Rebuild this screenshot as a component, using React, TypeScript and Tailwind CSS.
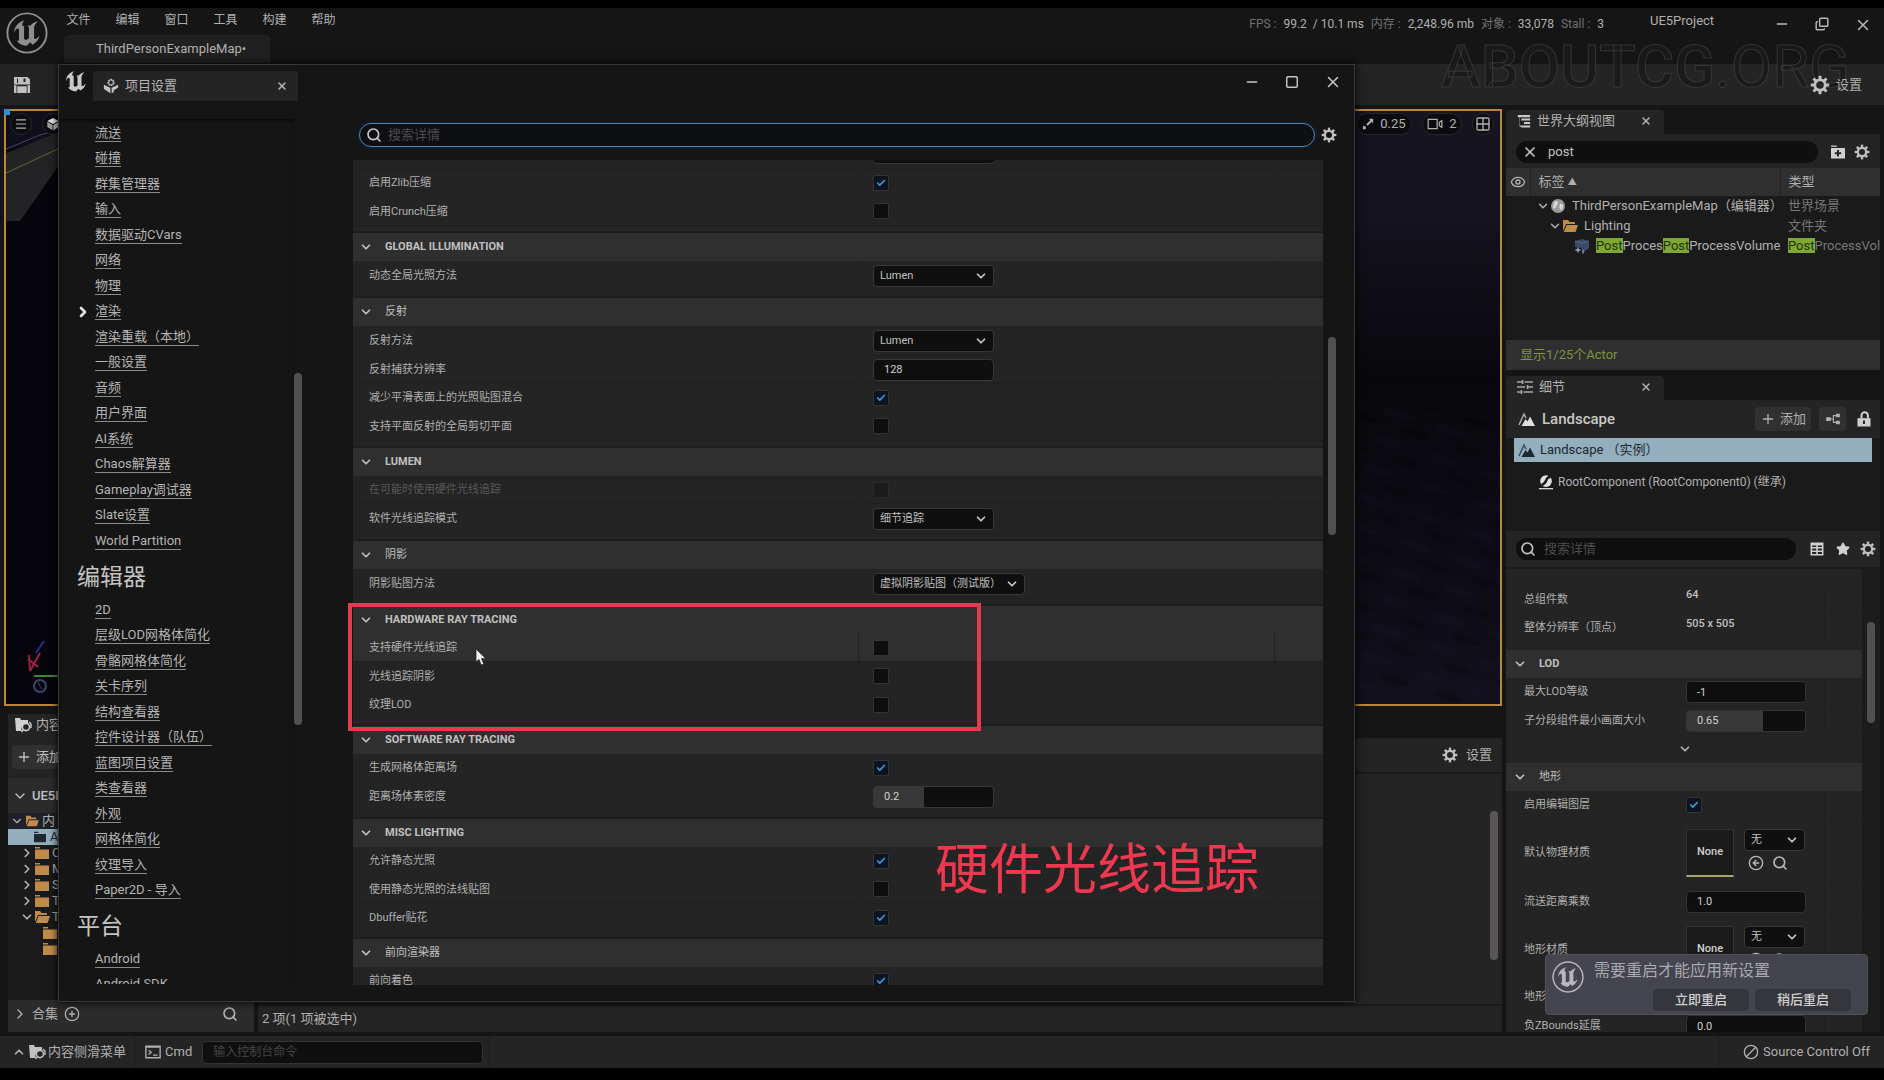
import React from "react";
import {
  Ban,
  Check,
  ChevronDown,
  ChevronRight,
  ChevronUp,
  CircleArrowLeft,
  CirclePlus,
  Copy,
  Eye,
  Grid2x2,
  Menu,
  Minus,
  Plus,
  Search,
  Square,
  Star,
  X,
} from "lucide-react";

/* ---------- drawings ---------- */

const U_PATH =
  "M19.13 13.729c-.206.997-1.126 3.557-4.06 4.942l-1.179-1.325-1.988 2a7.338 7.338 0 01-5.804-2.978 2.859 2.859 0 00.65.123c.326.006.678-.114.678-.66v-5.394a.89.89 0 00-1.116-.89c-.92.212-1.656 2.509-1.656 2.509a7.304 7.304 0 012.528-5.597 7.408 7.408 0 013.73-1.721c-1.006.573-1.57 1.507-1.57 2.29 0 1.262.76 1.109.984.923v7.28a1.157 1.157 0 00.148.256 1.075 1.075 0 00.88.445c.76 0 1.747-.868 1.747-.868V9.172c0-.6-.452-1.324-.905-1.572 0 0 .838-.149 1.484.346a5.537 5.537 0 01.387-.425c1.508-1.48 2.929-1.902 4.112-2.112 0 0-2.151 1.69-2.151 3.96 0 1.687.043 5.801.043 5.801.799.771 1.986-.342 3.059-1.441Z";

function UnrealRing({ className }: { className?: string }) {
  return (
    <svg viewBox="0 0 24 24" className={className} fill="currentColor">
      <circle cx="12" cy="12" r="11.2" fill="none" stroke="currentColor" strokeWidth="1.1" />
      <path d={U_PATH} />
    </svg>
  );
}

function UnrealU({ className }: { className?: string }) {
  return (
    <svg viewBox="4 5 16 15" className={className} fill="currentColor">
      <path d={U_PATH} />
    </svg>
  );
}

function Gear({ className }: { className?: string }) {
  return (
    <svg viewBox="0 0 20 20" className={className} fill="none" stroke="currentColor">
      <circle cx="10" cy="10" r="5.2" strokeWidth="2.8" />
      {[0, 45, 90, 135, 180, 225, 270, 315].map((a) => (
        <path key={a} d="M10 4.4V.8" strokeWidth="3" transform={`rotate(${a} 10 10)`} />
      ))}
    </svg>
  );
}

function SaveIcon({ className }: { className?: string }) {
  return (
    <svg viewBox="0 0 18 18" className={className} fill="currentColor">
      <path fillRule="evenodd" d="M1 1h13.500L17 3.500V8.500H1zM10.500 2.500v3.500h2V2.500zM4 2.500v4.500h1V2.500z" />
      <path d="M1 9.200h2.500V17H1zM14.500 9.200H17V17h-2.500zM4.300 10.200h9.400v6.800H4.300z" />
    </svg>
  );
}

function NewFolderIcon({ className }: { className?: string }) {
  return (
    <svg viewBox="0 0 16 16" className={className}>
      <path d="M1 1.500h5l1.500 1.300H1zM1 4h14v10.500H1z" fill="currentColor" />
      <path d="M8 6v6.400M4.800 9.200h6.400" stroke="#242424" strokeWidth="2" />
    </svg>
  );
}

function LockIcon({ className }: { className?: string }) {
  return (
    <svg viewBox="0 0 16 16" className={className}>
      <path d="M5.500 7.500V4.500a3.200 3.200 0 0 1 6.400 0V7" fill="none" stroke="currentColor" strokeWidth="2" />
      <path d="M1.500 7.200h13V15.500h-13z" fill="currentColor" />
      <path d="M8 9.500v3.500" stroke="#242424" strokeWidth="2" />
    </svg>
  );
}

function TableIcon({ className }: { className?: string }) {
  return (
    <svg viewBox="0 0 16 16" className={className} fill="none" stroke="currentColor" strokeWidth="1.8">
      <path d="M1.500 1.500h13v13h-13zM1.500 3h13M1.500 6.500h13M1.500 10.500h13M8 4v10.500" />
    </svg>
  );
}

function CubeIcon({ className }: { className?: string }) {
  return (
    <svg viewBox="0 0 16 16" className={className}>
      <path d="M8 1l6.500 3.500L8 8 1.500 4.500z" fill="#e0e0e0" />
      <path d="M1.500 5.500 7.500 9v6l-6-3.500z" fill="#a0a0a0" />
      <path d="M14.500 5.500 8.500 9v6l6-3.500z" fill="#c0c0c0" />
    </svg>
  );
}

function Folder({ open, className }: { open?: boolean; className?: string }) {
  return (
    <svg viewBox="0 0 16 14" className={className} fill="currentColor">
      {open ? (
        <>
          <path d="M1 1h5l1.500 2H13v2H4L1.600 11H1z" />
          <path d="M4.600 6H16l-2.400 7H1.800z" />
        </>
      ) : (
        <path d="M1 1h5v1.400H1zM1 3.400h14V13H1z" />
      )}
    </svg>
  );
}

function ContentIcon({ className }: { className?: string }) {
  return (
    <svg viewBox="0 0 18 16" className={className}>
      <path d="M1 1h5l1 2h7v4a5 5 0 0 0-6 7H2z" fill="currentColor" />
      <circle cx="12" cy="10" r="3.600" fill="none" stroke="currentColor" strokeWidth="1.600" />
      <path d="M9.400 12.600 7.600 15M15 5l2 2v4" fill="none" stroke="currentColor" strokeWidth="1.400" />
    </svg>
  );
}

function ProjectIcon({ className }: { className?: string }) {
  return (
    <svg viewBox="0 0 18 18" className={className}>
      <circle cx="9" cy="5" r="3" fill="none" stroke="currentColor" strokeWidth="2.200" strokeDasharray="2 .6" />
      <path d="M1 7.500 8.300 11v6.200L1 12.500z" fill="currentColor" />
      <path d="M17 7.500 9.700 11v6.200l2.600-1.400-.2-2L17 11z" fill="currentColor" />
    </svg>
  );
}

function LandscapeIcon({ className }: { className?: string }) {
  return (
    <svg viewBox="0 0 18 16" className={className}>
      <path d="M1 14 6 3l2 4" fill="none" stroke="currentColor" strokeWidth="1.600" opacity=".7" />
      <path d="M3.500 15 7.600 8l2 2.600L12 5.500 17 15z" fill="currentColor" />
    </svg>
  );
}

function SceneRootIcon({ className }: { className?: string }) {
  return (
    <svg viewBox="0 0 18 18" className={className}>
      <circle cx="9" cy="8" r="6.600" fill="currentColor" />
      <path d="M14 3.500C7 3.500 12 10 4 12.500" fill="none" stroke="#1a1a1a" strokeWidth="2.800" />
      <path d="M1 16.500h16" stroke="currentColor" strokeWidth="1.400" />
    </svg>
  );
}

function OutlinerIcon({ className }: { className?: string }) {
  return (
    <svg viewBox="0 0 16 16" className={className} fill="currentColor">
      <path d="M1 1h14v2.600H1zM5 5h10v2.400H5zM8 9h7v2.400H8zM5 13h10v2.400H5zM2 4h1v10.600h2V13H3.400V4z" />
    </svg>
  );
}

function SlidersIcon({ className }: { className?: string }) {
  return (
    <svg viewBox="0 0 16 16" className={className} stroke="currentColor" strokeWidth="1.600" fill="none">
      <path d="M0 3h5M7.500 3H16M5.600 1v4M0 8h8M10.500 8H16M10.500 6v4M0 13h4M6.500 13H16M4.500 11v4" />
    </svg>
  );
}

function NodesIcon({ className }: { className?: string }) {
  return (
    <svg viewBox="0 0 18 14" className={className} fill="currentColor">
      <path d="M1 5h5.500v4.200H1zM12.500 1H17v4h-4.500zM12.500 9H17v4h-4.500z" />
      <path d="M6 7h3.500M12.500 3h-3v8h3" fill="none" stroke="currentColor" strokeWidth="1.300" />
    </svg>
  );
}

function CameraIcon({ className }: { className?: string }) {
  return (
    <svg viewBox="0 0 18 14" className={className} fill="none" stroke="currentColor" strokeWidth="1.400">
      <path d="M1 1.500h10.500v11H1zM14 5v4l3 2V3z" />
    </svg>
  );
}

function ScaleIcon({ className }: { className?: string }) {
  return (
    <svg viewBox="0 0 14 14" className={className} fill="currentColor">
      <path d="M1 9.500h3.500V13H1zM8 1h5v5l-1.700-1.700L6.600 9 5 7.400l4.700-4.700z" />
    </svg>
  );
}

function TerminalIcon({ className }: { className?: string }) {
  return (
    <svg viewBox="0 0 18 16" className={className} fill="none" stroke="currentColor" strokeWidth="1.500">
      <path d="M1 1.500h16v13H1z" />
      <path d="M1 2.500h16M4 6l3 2.300L4 10.800M9 11.500h5" />
    </svg>
  );
}

function PostVolumeIcon({ className }: { className?: string }) {
  return (
    <svg viewBox="0 0 16 16" className={className}>
      <path d="M1 3 8 1l7 2v7l-5 4-3-4-6-1z" fill="#3b4a68" />
      <path d="M1 3l7 2 7-2" fill="none" stroke="#51658c" />
      <path d="M4 9.500v5M1.500 12h5M9 12v3.500" stroke="#9aa6bd" strokeWidth="1.300" />
    </svg>
  );
}

function Scene() {
  return (
    <svg className="absolute inset-0 h-full w-full" preserveAspectRatio="none">
      <defs>
        <linearGradient id="sky" x1="0" y1="0" x2="0" y2="1">
          <stop offset="0" stopColor="#15141f" />
          <stop offset=".18" stopColor="#14131e" />
          <stop offset=".45" stopColor="#08080c" />
          <stop offset=".68" stopColor="#0c0b13" />
          <stop offset="1" stopColor="#11101b" />
        </linearGradient>
        <pattern id="waves" width="56" height="30" patternUnits="userSpaceOnUse" patternTransform="rotate(18)">
          <ellipse cx="18" cy="8" rx="16" ry="4" fill="#1b1937" opacity=".16" />
          <ellipse cx="40" cy="22" rx="15" ry="4" fill="#000" opacity=".2" />
        </pattern>
      </defs>
      <rect width="100%" height="100%" fill="url(#sky)" />
      <rect y="50%" width="100%" height="50%" fill="url(#waves)" />
      <rect width="56" height="100%" fill="#06050b" />
      <path d="M0 0h56v22L0 40z" fill="#0f0e1b" />
      <path d="M0 42 56 20v30L14 110H0z" fill="#232326" />
      <path d="M0 38 34 24 56 18" stroke="#4a4660" fill="none" />
      <path d="M0 62 56 36" stroke="#5d6c2c" fill="none" />
      <path d="m24 560 10-18M22 548l10 8M24 560l-1-16" stroke="#a01f45" strokeWidth="2" />
      <path d="m30 542 8-12" stroke="#2a2a8a" strokeWidth="2" />
      <path d="M28 565h26" stroke="#3b8a35" strokeWidth="2" />
      <circle cx="34" cy="575" r="6" fill="none" stroke="#39496b" strokeWidth="2" />
      <path d="m32 572 4 6" stroke="#39496b" />
    </svg>
  );
}

/* ---------- controls ---------- */

function CheckBox({ id, checked, disabled }: { id: string; checked?: boolean; disabled?: boolean }) {
  return (
    <span className={disabled ? "grid size-4 opacity-40" : "grid size-4"}>
      <input
        id={id}
        type="checkbox"
        defaultChecked={checked}
        disabled={disabled}
        className="peer col-start-1 row-start-1 size-4 appearance-none rounded-xs border border-[#333] bg-[#0e0e0e] checked:bg-[#0b1420]"
      />
      <Check
        strokeWidth={4}
        className="pointer-events-none invisible col-start-1 row-start-1 m-auto size-2.5 text-[#3a9bd0] peer-checked:visible"
      />
    </span>
  );
}

function Combo({ id, value, width }: { id: string; value: string; width: string }) {
  return (
    <span className={"relative flex items-center " + width}>
      <select
        id={id}
        className="h-[22px] w-full appearance-none rounded-sm border border-[#383838] bg-[#0f0f0f] pt-px pl-1.5 text-[11px] text-[#c0c0c0]"
      >
        <option>{value}</option>
      </select>
      <ChevronDown strokeWidth={3} className="pointer-events-none absolute right-1.5 size-3.5 text-[#c8c8c8]" />
    </span>
  );
}

type Row = {
  label: string;
  kind: "check" | "combo" | "number" | "slider";
  on?: boolean;
  off?: boolean;
  hot?: boolean;
  wide?: boolean;
  value?: string;
};

type Group = { title: string; latin?: boolean; rows: Row[] };

const groups: Group[] = [
  { title: "GLOBAL ILLUMINATION", latin: true, rows: [{ label: "动态全局光照方法", kind: "combo", value: "Lumen" }] },
  {
    title: "反射",
    rows: [
      { label: "反射方法", kind: "combo", value: "Lumen" },
      { label: "反射捕获分辨率", kind: "number", value: "128" },
      { label: "减少平滑表面上的光照贴图混合", kind: "check", on: true },
      { label: "支持平面反射的全局剪切平面", kind: "check" },
    ],
  },
  {
    title: "LUMEN",
    latin: true,
    rows: [
      { label: "在可能时使用硬件光线追踪", kind: "check", off: true },
      { label: "软件光线追踪模式", kind: "combo", value: "细节追踪" },
    ],
  },
  { title: "阴影", rows: [{ label: "阴影贴图方法", kind: "combo", value: "虚拟阴影贴图（测试版）", wide: true }] },
  {
    title: "HARDWARE RAY TRACING",
    latin: true,
    rows: [
      { label: "支持硬件光线追踪", kind: "check", hot: true },
      { label: "光线追踪阴影", kind: "check" },
      { label: "纹理LOD", kind: "check" },
    ],
  },
  {
    title: "SOFTWARE RAY TRACING",
    latin: true,
    rows: [
      { label: "生成网格体距离场", kind: "check", on: true },
      { label: "距离场体素密度", kind: "slider", value: "0.2" },
    ],
  },
  {
    title: "MISC LIGHTING",
    latin: true,
    rows: [
      { label: "允许静态光照", kind: "check", on: true },
      { label: "使用静态光照的法线贴图", kind: "check" },
      { label: "Dbuffer贴花", kind: "check", on: true },
    ],
  },
  { title: "前向渲染器", rows: [{ label: "前向着色", kind: "check", on: true }] },
];

function SettingRow({ row }: { row: Row }) {
  const height =
    row.kind === "combo" || row.kind === "slider"
      ? "h-[30px]"
      : "h-7 last:even:h-[29px] nth-2:nth-last-2:h-[29px]";
  return (
    <div className={"flex shrink-0 border-b border-[#202020] " + height + (row.hot ? " bg-[#2f2f2f]" : "")}>
      <div className="flex w-[506px] items-center border-r border-[#202020] pt-0.5 pl-4">
        <label htmlFor={row.label} className={row.off ? "text-[#585858]" : "text-[#b0b0b0]"}>
          {row.label}
        </label>
      </div>
      <div className="flex flex-1 items-center pl-3.5">
        {row.kind === "check" && <CheckBox id={row.label} checked={row.on} disabled={row.off} />}
        {row.kind === "combo" && (
          <Combo id={row.label} value={row.value ?? ""} width={row.wide ? "w-[152px]" : "w-[121px]"} />
        )}
        {row.kind === "number" && (
          <input
            id={row.label}
            defaultValue={row.value}
            className="h-[22px] w-[121px] rounded-sm border border-[#383838] bg-[#0f0f0f] pl-2.5 text-[#d0d0d0]"
          />
        )}
        {row.kind === "slider" && (
          <input
            id={row.label}
            defaultValue={row.value}
            className="h-[22px] w-[121px] rounded-sm border border-[#383838] bg-[linear-gradient(90deg,#383838_42%,#0f0f0f_42%)] pl-2.5 text-[#d0d0d0]"
          />
        )}
      </div>
      <div className="w-[49px] border-l border-[#202020]" />
    </div>
  );
}

function SettingGroup({ group }: { group: Group }) {
  return (
    <section className="shrink-0">
      <button
        className={
          "flex h-7 w-full items-center gap-3 bg-[#2f2f2f] pl-1.5 text-[#c0c0c0] " +
          (group.latin ? "font-bold" : "font-normal")
        }
      >
        <ChevronDown strokeWidth={3} className="size-3.5" />
        {group.title}
      </button>
      <div>
        {group.rows.map((r) => (
          <SettingRow key={r.label} row={r} />
        ))}
      </div>
      <div className="h-[7px] border-b-2 border-[#1d1d1d]" />
    </section>
  );
}

const engineLinks = [
  "流送", "碰撞", "群集管理器", "输入", "数据驱动CVars", "网络", "物理", "渲染", "渲染重载（本地）", "一般设置",
  "音频", "用户界面", "AI系统", "Chaos解算器", "Gameplay调试器", "Slate设置", "World Partition",
];
const editorLinks = [
  "2D", "层级LOD网格体简化", "骨骼网格体简化", "关卡序列", "结构查看器", "控件设计器（队伍）", "蓝图项目设置",
  "类查看器", "外观", "网格体简化", "纹理导入", "Paper2D - 导入",
];

function LinkList({ items }: { items: string[] }) {
  return (
    <ul className="pl-9">
      {items.map((t) => (
        <li key={t} className="relative flex h-[26px] items-center even:h-[25px]">
          {t === "渲染" && <ChevronRight strokeWidth={4} className="absolute -left-5 size-4 text-[#e0e0e0]" />}
          <a href="#" className="border-b border-[#8a8a8a] leading-4">
            {t}
          </a>
        </li>
      ))}
    </ul>
  );
}

function ProjectSettings() {
  return (
    <div
      role="dialog"
      aria-label="项目设置"
      className="absolute top-16 right-[529px] bottom-[78px] left-[58px] flex flex-col border border-[#383838] bg-[#151515] text-[#b4b4b4] shadow-[0_0_8px_#000]"
    >
      <header className="flex h-[42px] shrink-0 items-start">
        <UnrealU className="mt-1.5 ml-1.5 h-[22px] w-[22px] text-[#c8c8c8]" />
        <div className="mt-1.5 ml-1.5 flex h-[30px] w-[205px] items-center rounded-t-sm bg-[#242424] pr-2.5 pl-2.5">
          <ProjectIcon className="size-4 text-[#c0c0c0]" />
          <span className="ml-1.5 flex-1 text-[13px]">项目设置</span>
          <button aria-label="关闭标签">
            <X strokeWidth={3} className="size-3" />
          </button>
        </div>
        <div className="mt-2 mr-3 ml-auto flex gap-[25px] text-[#c8c8c8]">
          <button aria-label="最小化"><Minus strokeWidth={2} className="size-4" /></button>
          <button aria-label="最大化"><Square strokeWidth={2.5} className="size-3.5" /></button>
          <button aria-label="关闭"><X strokeWidth={2} className="size-[18px]" /></button>
        </div>
      </header>
      <div className="flex min-h-0 flex-1">
        <nav className="mt-3 mb-[17px] w-[235px] overflow-hidden pt-px text-[13px] shadow-[inset_0_2px_2px_#0c0c0c]">
          <LinkList items={engineLinks} />
          <h2 className="flex h-[43px] items-center pt-1.5 pl-[18px] text-[23px] text-[#c4c4c4]">编辑器</h2>
          <LinkList items={editorLinks} />
          <h2 className="flex h-[43px] items-center pt-1.5 pl-[18px] text-[23px] text-[#c4c4c4]">平台</h2>
          <LinkList items={["Android", "Android SDK"]} />
        </nav>
        <div className="flex w-2 flex-col pt-[266px]">
          <div className="h-[352px] rounded-full bg-[#505050]" />
        </div>
        <main className="ml-[51px] flex min-w-0 flex-1 flex-col pt-4">
          <div className="flex items-center gap-1.5 pr-[17px] pl-1.5">
            <label className="flex h-6 flex-1 items-center rounded-full border border-[#5585b0] bg-[#0e0f12] pl-1.5 shadow-[0_0_4px_#0a2a50]">
              <Search strokeWidth={2.5} className="size-4 text-[#c8c8c8]" />
              <input
                aria-label="搜索详情"
                placeholder="搜索详情"
                className="ml-1.5 min-w-0 flex-1 bg-transparent text-[13px] outline-none placeholder:text-[#4c4c4c]"
              />
            </label>
            <button aria-label="设置选项"><Gear className="size-4 text-[#c0c0c0]" /></button>
          </div>
          <div className="mt-[13px] mb-4 flex min-h-0 flex-1 text-[11px]">
            <div className="flex min-w-0 flex-1 flex-col overflow-hidden bg-[#242424]">
              <div className="h-[9px] shrink-0 border-b border-[#202020] pl-[520px]">
                <div className="h-1 w-[121px] rounded-b-sm border-b border-[#383838] bg-[#0f0f0f]" />
              </div>
              <div className="shrink-0">
                <SettingRow row={{ label: "启用Zlib压缩", kind: "check", on: true }} />
                <SettingRow row={{ label: "启用Crunch压缩", kind: "check" }} />
                <div className="h-[7px] border-b-2 border-[#1d1d1d]" />
              </div>
              {groups.map((g) => (
                <SettingGroup key={g.title} group={g} />
              ))}
            </div>
            <div className="flex w-[31px] flex-col bg-[#151515] pt-[177px] pl-[5px]">
              <div className="h-[198px] w-2 rounded-full bg-[#505050]" />
            </div>
          </div>
        </main>
      </div>
    </div>
  );
}

/* ---------- right side ---------- */

function Mark({ children }: { children: React.ReactNode }) {
  return <mark className="bg-[#7fa832] text-[#26310f]">{children}</mark>;
}

function PanelTab({ icon, title }: { icon: React.ReactNode; title: string }) {
  return (
    <div className="flex h-6 w-[158px] shrink-0 items-center rounded-t-sm bg-[#242424] pr-3 pb-0.5 pl-[11px] text-[13px] text-[#b0b0b0]">
      {icon}
      <span className="ml-1.5 flex-1">{title}</span>
      <button aria-label={"关闭" + title}><X strokeWidth={3} className="size-3" /></button>
    </div>
  );
}

function Outliner() {
  return (
    <section className="flex h-[260px] shrink-0 flex-col">
      <PanelTab icon={<OutlinerIcon className="size-3.5 text-[#c8c8c8]" />} title="世界大纲视图" />
      <div className="flex min-h-0 flex-1 flex-col bg-[#1a1a1a]">
        <div className="flex h-[34px] shrink-0 items-center bg-[#242424] pt-px pr-2.5 pl-2.5">
          <label className="flex h-[22px] flex-1 items-center rounded-full bg-[#0f0f0f] pl-1.5">
            <X strokeWidth={2.5} className="size-4 text-[#c8c8c8]" />
            <input aria-label="搜索大纲" defaultValue="post" className="ml-2.5 w-40 text-[13px] text-[#c0c0c0]" />
          </label>
          <button aria-label="新建文件夹" className="ml-3">
            <NewFolderIcon className="size-4 text-[#d0d0d0]" />
          </button>
          <button aria-label="大纲设置" className="ml-2"><Gear className="size-4 text-[#c0c0c0]" /></button>
        </div>
        <table className="w-full table-fixed border-collapse text-left text-[13px] whitespace-nowrap text-[#b0b0b0]">
          <thead>
            <tr className="h-7 bg-[#2f2f2f]">
              <th className="w-6 border-r border-[#242424] pl-1"><Eye className="size-4" /></th>
              <th className="w-[250px] border-r border-[#242424] pl-2 font-normal">
                标签 <span className="align-middle text-[9px]">▲</span>
              </th>
              <th className="pl-2 font-normal">类型</th>
            </tr>
          </thead>
          <tbody>
            <tr className="h-5">
              <td />
              <td className="pl-1.5">
                <div className="flex items-center">
                  <ChevronDown strokeWidth={2.5} className="size-3.5 shrink-0" />
                  <svg viewBox="0 0 16 16" className="mr-1.5 size-4 shrink-0">
                    <circle cx="8" cy="8" r="7" fill="#9a9a9a" />
                    <path d="M4 4c4-3 5 1 3 3s-1 5-4 3zM10 6c3-1 4 2 2 6-3 0-3-4-2-6z" fill="#d8d8d8" />
                  </svg>
                  ThirdPersonExampleMap（编辑器）
                </div>
              </td>
              <td className="pl-2 text-[#777]">世界场景</td>
            </tr>
            <tr className="h-5">
              <td />
              <td className="pl-[18px]">
                <div className="flex items-center">
                  <ChevronDown strokeWidth={2.5} className="size-3.5" />
                  <Folder open className="mr-1.5 h-3.5 w-4 text-[#c08a4a]" />
                  Lighting
                </div>
              </td>
              <td className="pl-2 text-[#777]">文件夹</td>
            </tr>
            <tr className="h-5">
              <td />
              <td className="pl-11">
                <div className="flex items-center">
                  <PostVolumeIcon className="mr-1.5 size-4 shrink-0" />
                  <span><Mark>Post</Mark>Proces<Mark>Post</Mark>ProcessVolume</span>
                </div>
              </td>
              <td className="overflow-hidden pl-2 text-[#777]"><Mark>Post</Mark>ProcessVolume</td>
            </tr>
          </tbody>
        </table>
        <div className="mt-auto flex h-[30px] items-center bg-[#2f2f2f] pl-3.5 text-[13px] text-[#7f9440]">
          显示1/25个Actor
        </div>
      </div>
    </section>
  );
}

const inputBox = "h-[22px] w-[120px] rounded-sm border border-[#333] bg-[#0f0f0f] pl-2.5 text-[#d0d0d0]";

function DetailRow({ label, height, children }: { label: string; height: string; children?: React.ReactNode }) {
  return (
    <div className={"flex shrink-0 border-b border-[#202020] " + height}>
      <div className="flex w-[168px] items-center border-r border-[#202020] pt-px pl-[18px]">
        <label htmlFor={"d-" + label}>{label}</label>
      </div>
      <div className="flex flex-1 items-center pl-3">{children}</div>
      <div className="w-[38px] border-l border-[#202020]" />
    </div>
  );
}

function DetailHeader({ title, latin }: { title: string; latin?: boolean }) {
  return (
    <button
      className={
        "flex h-7 shrink-0 items-center gap-3 bg-[#2f2f2f] pl-[7px] text-[#c0c0c0] " +
        (latin ? "font-bold" : "font-normal")
      }
    >
      <ChevronDown strokeWidth={3} className="size-3.5" />
      {title}
    </button>
  );
}

function AssetPicker({ id, line }: { id: string; line?: boolean }) {
  return (
    <div className="flex gap-2.5">
      <div
        className={
          "flex size-12 items-center justify-center border border-[#333] bg-[#1a1a1a] font-medium text-[#d0d0d0]" +
          (line ? " border-b-2 border-b-[#a8a86a]" : "")
        }
      >
        None
      </div>
      <div className="flex flex-col gap-1">
        <Combo id={id} value="无" width="w-[61px]" />
        <div className="flex gap-2 pl-1 text-[#b8b8b8]">
          <button aria-label="使用所选"><CircleArrowLeft className="size-4" /></button>
          <button aria-label="浏览"><Search strokeWidth={2.5} className="size-4" /></button>
        </div>
      </div>
    </div>
  );
}

function Details() {
  return (
    <section className="mt-1.5 flex min-h-0 flex-1 flex-col">
      <PanelTab icon={<SlidersIcon className="size-4 text-[#a8a8a8]" />} title="细节" />
      <div className="flex min-h-0 flex-1 flex-col bg-[#242424] text-[#b0b0b0]">
        <div className="flex h-[38px] shrink-0 items-center pr-2 pl-3">
          <LandscapeIcon className="h-4 w-[18px] text-[#e0e0e0]" />
          <h3 className="ml-1.5 flex-1 text-[15px] font-medium text-[#c8c8c8]">Landscape</h3>
          <button className="flex h-6 w-14 items-center justify-center gap-1 rounded-sm bg-[#303030] text-[13px]">
            <Plus className="size-4" />
            添加
          </button>
          <button aria-label="蓝图" className="ml-2 flex h-6 w-[27px] items-center justify-center rounded-sm bg-[#303030]">
            <NodesIcon className="h-3 w-4" />
          </button>
          <button aria-label="锁定" className="ml-2.5"><LockIcon className="size-4 text-[#d0d0d0]" /></button>
        </div>
        <div className="h-[93px] shrink-0 bg-[#1a1a1a] pr-2 pl-2">
          <div className="flex h-6 items-center bg-[#93aebd] pl-1 text-[13px] text-[#1d2830]">
            <LandscapeIcon className="mr-1 h-4 w-[18px]" />
            Landscape （实例）
          </div>
          <div className="mt-2.5 flex h-5 items-center pl-6 text-[12px]">
            <SceneRootIcon className="mr-1 size-4 text-[#e0e0e0]" />
            RootComponent (RootComponent0) (继承)
          </div>
        </div>
        <div className="flex h-[38px] shrink-0 items-center border-b-2 border-[#1c1c1c] pr-1 pl-2.5">
          <label className="flex h-[22px] flex-1 items-center rounded-full bg-[#0f0f0f] pl-1">
            <Search strokeWidth={2.5} className="size-4 text-[#c0c0c0]" />
            <input
              aria-label="搜索细节"
              placeholder="搜索详情"
              className="ml-2 w-40 text-[13px] placeholder:text-[#4c4c4c]"
            />
          </label>
          <button aria-label="属性矩阵" className="ml-3.5"><TableIcon className="size-3.5 text-[#d0d0d0]" /></button>
          <button aria-label="收藏" className="ml-3"><Star className="size-3.5 fill-current text-[#d0d0d0]" /></button>
          <button aria-label="细节设置" className="ml-2.5"><Gear className="size-4 text-[#c0c0c0]" /></button>
        </div>
        <div className="flex min-h-0 flex-1 text-[11px]">
          <div className="flex min-w-0 flex-1 flex-col overflow-hidden">
            <div className="h-[17px] shrink-0" />
            <DetailRow label="总组件数" height="h-7">
              <span className="-mt-2 font-medium text-[#c0c0c0]">64</span>
            </DetailRow>
            <DetailRow label="整体分辨率（顶点）" height="h-[29px]">
              <span className="-mt-2 font-medium text-[#c0c0c0]">505 x 505</span>
            </DetailRow>
            <div className="h-[7px] shrink-0" />
            <DetailHeader title="LOD" latin />
            <DetailRow label="最大LOD等级" height="h-[29px]">
              <input id="d-最大LOD等级" defaultValue="-1" className={inputBox} />
            </DetailRow>
            <DetailRow label="子分段组件最小画面大小" height="h-7">
              <input
                id="d-子分段组件最小画面大小"
                defaultValue="0.65"
                className="h-[22px] w-[120px] rounded-sm border border-[#333] bg-[linear-gradient(90deg,#383838_64%,#0f0f0f_64%)] pl-2.5 text-[#d0d0d0]"
              />
            </DetailRow>
            <button aria-label="展开高级" className="flex h-7 shrink-0 items-center pl-[172px]">
              <ChevronDown strokeWidth={3} className="size-3.5" />
            </button>
            <DetailHeader title="地形" />
            <DetailRow label="启用编辑图层" height="h-[29px]">
              <CheckBox id="d-启用编辑图层" checked />
            </DetailRow>
            <DetailRow label="默认物理材质" height="h-[67px]">
              <AssetPicker id="d-默认物理材质" line />
            </DetailRow>
            <DetailRow label="流送距离乘数" height="h-[30px]">
              <input id="d-流送距离乘数" defaultValue="1.0" className={inputBox} />
            </DetailRow>
            <DetailRow label="地形材质" height="h-[66px]">
              <AssetPicker id="d-地形材质" />
            </DetailRow>
            <DetailRow label="地形" height="h-[29px]" />
            <DetailRow label="负ZBounds延展" height="h-[29px]">
              <input id="d-负ZBounds延展" defaultValue="0.0" className={inputBox} />
            </DetailRow>
          </div>
          <div className="w-[18px] bg-[#1c1c1c] pt-[53px] pl-[5px]">
            <div className="h-[101px] w-2 rounded-full bg-[#505050]" />
          </div>
        </div>
      </div>
    </section>
  );
}

/* ---------- lower left ---------- */

function ContentBrowser() {
  return (
    <section className="flex h-[326px] shrink-0 pt-2 pl-2 text-[13px] text-[#b0b0b0]">
      <div className="flex w-[246px] flex-col bg-[#1a1a1a]">
        <div className="flex h-[22px] shrink-0 items-center gap-1 bg-[#242424] pl-1.5">
          <ContentIcon className="h-4 w-[18px] text-[#d0d0d0]" />
          内容
        </div>
        <div className="flex h-[42px] shrink-0 items-center bg-[#242424] pl-1">
          <button className="flex h-6 items-center gap-1 rounded-sm bg-[#303030] px-1 text-[#c0c0c0]">
            <Plus className="size-4" />
            添加
          </button>
        </div>
        <button className="flex h-[35px] shrink-0 items-center gap-1 bg-[#2b2b2b] pl-1 font-medium text-[#c0c0c0]">
          <ChevronDown className="size-4" />
          UE5P
        </button>
        <ul className="leading-4 whitespace-nowrap">
          <li className="flex h-4 items-center bg-[#202028]">
            <ChevronDown className="ml-0.5 size-3.5" />
            <Folder open className="mr-0.5 h-3 w-4 text-[#c08a4a]" />
            内
          </li>
          <li className="flex h-4 items-center bg-[#93aebd] pl-6 text-[#1d2830]">
            <Folder className="mr-0.5 h-3 w-4" />
            A
          </li>
          {["C", "M", "S", "T"].map((t) => (
            <li key={t} className="flex h-4 items-center pl-3">
              <ChevronRight strokeWidth={3} className="size-3.5" />
              <Folder className="mr-0.5 h-3.5 w-4 text-[#c08a4a]" />
              {t}
            </li>
          ))}
          <li className="flex h-4 items-center pl-3">
            <ChevronDown strokeWidth={3} className="size-3.5" />
            <Folder open className="mr-0.5 h-3.5 w-4 text-[#c08a4a]" />
            T
          </li>
          <li className="flex h-4 items-center pl-[34px]">
            <Folder className="h-3.5 w-4 text-[#c08a4a]" />
          </li>
          <li className="flex h-4 items-center pl-[34px]">
            <Folder className="h-3.5 w-4 text-[#c08a4a]" />
          </li>
        </ul>
        <div className="mt-auto flex h-8 items-center bg-[#2b2b2b] pr-4 pb-1 pl-1">
          <ChevronRight className="size-4" />
          <span className="ml-1">合集</span>
          <button aria-label="新建合集" className="ml-1.5"><CirclePlus className="size-4" /></button>
          <button aria-label="搜索合集" className="ml-auto"><Search strokeWidth={2.5} className="size-4" /></button>
        </div>
      </div>
      <div className="mt-6 ml-1 flex min-w-0 flex-1 flex-col bg-[#242424]">
        <div className="flex h-9 shrink-0 items-center justify-end border-b-2 border-[#1a1a1a] pr-2.5">
          <button className="flex items-center gap-2">
            <Gear className="size-4 text-[#c0c0c0]" />
            设置
          </button>
        </div>
        <div className="flex min-h-0 flex-1 flex-col items-end border-b-2 border-[#1a1a1a] pt-[37px] pr-1">
          <div className="h-[149px] w-2 rounded-full bg-[#5a5656]" />
        </div>
        <div className="flex h-[26px] shrink-0 items-center pl-1">2 项(1 项被选中)</div>
      </div>
    </section>
  );
}

function RestartToast() {
  return (
    <div
      role="alert"
      className="absolute right-4 bottom-[65px] flex h-[61px] w-[323px] rounded-sm border border-[#50505a] bg-linear-to-r from-[#45454f] to-[#42444b] text-[#b8b8bc]"
    >
      <UnrealRing className="mt-1.5 ml-1.5 size-8 shrink-0" />
      <div className="flex flex-1 flex-col pr-4 pl-2.5">
        <p className="pt-1 text-base leading-6 text-[#a8a8b0]">需要重启才能应用新设置</p>
        <div className="mt-1.5 flex justify-end gap-1.5 text-[13px] font-medium text-[#d0d0d0]">
          <button className="h-[22px] w-24 rounded-sm bg-[#35363c]">立即重启</button>
          <button className="h-[22px] w-24 rounded-sm bg-[#35363c]">稍后重启</button>
        </div>
      </div>
    </div>
  );
}

const pill = "flex h-[22px] items-center justify-center gap-1.5 rounded-full border border-[#26252c] bg-[#0c0c10]";

export default function App() {
  return (
    <div className="relative flex h-screen flex-col overflow-hidden bg-black pt-2 pb-3 font-['Roboto','Noto_Sans_CJK_SC',sans-serif] text-[#b0b0b0]">
      <div className="flex min-h-0 flex-1 flex-col bg-[#151515]">
        <header className="flex h-14 shrink-0">
          <UnrealRing className="mt-1 ml-1.5 size-[42px] text-[#8e8e8e]" />
          <div className="ml-4">
            <nav className="flex h-[27px] items-center gap-6 pb-1 pl-0.5 text-[12px]">
              {["文件", "编辑", "窗口", "工具", "构建", "帮助"].map((m) => (
                <button key={m} className="w-[25px] whitespace-nowrap">{m}</button>
              ))}
            </nav>
            <div className="flex h-7 w-[206px] items-center rounded-t-sm bg-[#202020] pl-8 text-[13px]">
              ThirdPersonExampleMap•
            </div>
          </div>
          <dl className="mt-1.5 ml-auto flex h-5 items-center gap-[7px] text-[12px] whitespace-pre">
            <dt className="text-[#707070]">FPS :</dt>
            <dd>99.2  / 10.1 ms</dd>
            <dt className="text-[#707070]">内存 :</dt>
            <dd>2,248.96 mb</dd>
            <dt className="text-[#707070]">对象 :</dt>
            <dd>33,078</dd>
            <dt className="text-[#707070]">Stall :</dt>
            <dd>3</dd>
          </dl>
          <div className="mt-[3px] ml-[46px] h-5 w-16 text-[13px] leading-5">UE5Project</div>
          <div className="mt-2 mr-3 ml-[60px] flex h-4 gap-[25px] text-[#b8b8b8]">
            <button aria-label="最小化"><Minus className="size-4" /></button>
            <button aria-label="还原"><Copy className="size-3.5 -scale-y-100" strokeWidth={2.5} /></button>
            <button aria-label="关闭"><X className="size-[18px]" /></button>
          </div>
        </header>

        <div className="flex h-[41px] shrink-0 items-center justify-between bg-[#242424] pr-[22px] pl-[13px]">
          <button aria-label="保存"><SaveIcon className="size-[18px] text-[#c0c0c0]" /></button>
          <button className="z-10 flex items-center gap-1.5 text-[13px]">
            <Gear className="size-5 text-[#c0c0c0]" />
            设置
          </button>
        </div>

        <div className="flex min-h-0 flex-1">
          <div className="flex min-w-0 flex-1 flex-col pt-1">
            <div className="relative ml-1 flex flex-1 items-start border-2 border-[#b8863e] text-[13px]">
              <Scene />
              <div className="absolute -top-0.5 -left-0.5 size-1.5 bg-[#2f8fd0]" />
              <div className="relative flex w-full justify-between pt-0.5 pr-1.5 pl-1">
                <div className="flex gap-2.5">
                  <button aria-label="视口选项" className={pill + " w-[22px]"}><Menu className="size-3.5 shrink-0" /></button>
                  <button aria-label="透视" className={pill + " w-[22px]"}><CubeIcon className="size-3.5 shrink-0" /></button>
                </div>
                <div className="flex gap-2.5">
                  <button className={pill + " w-14"}><ScaleIcon className="size-3" />0.25</button>
                  <button className={pill + " w-10"}><CameraIcon className="h-3 w-4" />2</button>
                  <button aria-label="布局" className={pill + " w-[22px]"}><Grid2x2 className="size-4 shrink-0" /></button>
                </div>
              </div>
            </div>
            <ContentBrowser />
          </div>
          <aside className="mr-1 ml-1 flex w-[374px] shrink-0 flex-col pt-[5px]">
            <Outliner />
            <Details />
          </aside>
        </div>

        <footer className="mt-1 flex h-8 shrink-0 items-center bg-[#242424] text-[13px]">
          <button className="flex h-full items-center border-r border-[#1a1a1a] pr-2 pl-3">
            <ChevronUp strokeWidth={3} className="size-3.5" />
            <ContentIcon className="mx-0.5 h-4 w-[18px] text-[#c0c0c0]" />
            内容侧滑菜单
          </button>
          <label htmlFor="cmd" className="ml-2.5 flex items-center gap-1">
            <TerminalIcon className="h-4 w-4" />
            Cmd
          </label>
          <input
            id="cmd"
            placeholder="输入控制台命令"
            className="ml-2.5 h-[23px] w-[281px] rounded-sm border border-[#333] bg-[#0f0f0f] pl-2.5 text-[12px] placeholder:text-[#454545]"
          />
          <div className="ml-1.5 h-full border-l border-[#1a1a1a]" />
          <button className="ml-auto flex h-full items-center gap-1 border-l border-[#1a1a1a] pr-3.5 pl-6">
            <Ban className="size-4 -scale-x-100" />
            Source Control Off
          </button>
        </footer>
      </div>

      <div className="pointer-events-none absolute top-[27px] right-[34px] text-[60px] leading-20 text-[#1a1a1a] opacity-80 [-webkit-text-stroke:1px_#3c3c3c]">
        <span className="font-medium">ABOUTCG</span>.ORG
      </div>

      <ProjectSettings />
      <RestartToast />

      <div className="pointer-events-none absolute top-[603px] left-[348px] h-[128px] w-[633px] border-4 border-[#e23c50]" />
      <p className="pointer-events-none absolute top-[831px] left-[935px] text-[54px] leading-20 text-[#ee3850]">硬件光线追踪</p>
      <svg viewBox="0 0 12 18" className="pointer-events-none absolute top-[648px] left-[475px] h-[18px] w-3">
        <path d="M1 1v13l3-2.600L6.200 17l2.600-1.100-2.300-5.200H11z" fill="#f4f4f4" stroke="#222" strokeWidth=".8" />
      </svg>
    </div>
  );
}
